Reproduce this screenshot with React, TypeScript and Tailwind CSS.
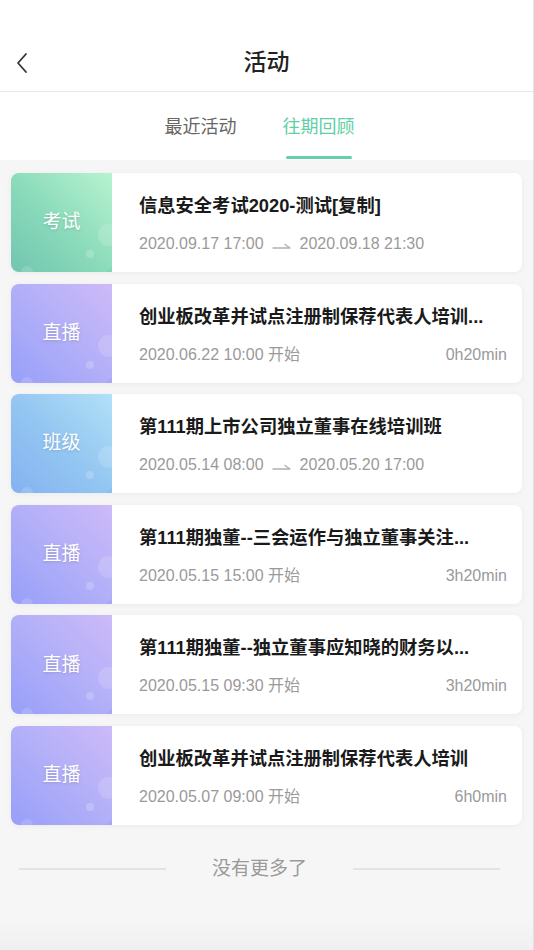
import React from "react";

type Item = {
  kind: "exam" | "live" | "class";
  label: string;
  title: string;
  start: string;
  end?: string;
  dur?: string;
};

const items: Item[] = [
  { kind: "exam", label: "考试", title: "信息安全考试2020-测试[复制]", start: "2020.09.17 17:00", end: "2020.09.18 21:30" },
  { kind: "live", label: "直播", title: "创业板改革并试点注册制保荐代表人培训...", start: "2020.06.22 10:00 开始", dur: "0h20min" },
  { kind: "class", label: "班级", title: "第111期上市公司独立董事在线培训班", start: "2020.05.14 08:00", end: "2020.05.20 17:00" },
  { kind: "live", label: "直播", title: "第111期独董--三会运作与独立董事关注...", start: "2020.05.15 15:00 开始", dur: "3h20min" },
  { kind: "live", label: "直播", title: "第111期独董--独立董事应知晓的财务以...", start: "2020.05.15 09:30 开始", dur: "3h20min" },
  { kind: "live", label: "直播", title: "创业板改革并试点注册制保荐代表人培训", start: "2020.05.07 09:00 开始", dur: "6h0min" },
];

function Harpoon() {
  return (
    <svg width="22" height="10" viewBox="0 0 22 10" className="mx-[7px] mt-[3px]">
      <path d="M2 7 H19 L14 3.5" fill="none" stroke="#b0b0b0" strokeWidth="1.4" strokeLinecap="round" strokeLinejoin="round" />
    </svg>
  );
}

function Panel({ kind, label }: { kind: Item["kind"]; label: string }) {
  const bg =
    kind === "exam"
      ? "bg-gradient-to-tr from-[#62bfa6] via-[#7fd8b4] to-[#b0f2cb]"
      : kind === "class"
      ? "bg-gradient-to-tr from-[#76a9ee] via-[#88c0f0] to-[#a9ddf6]"
      : "bg-gradient-to-tr from-[#8c94f8] via-[#a9a6f7] to-[#c8b2f7]";
  return (
    <div className={`relative w-[101px] shrink-0 overflow-hidden rounded-l-[8px] ${bg} flex items-center justify-center`}>
      <div className="absolute -left-[60px] -top-[70px] h-[190px] w-[190px] rounded-full bg-white/10" />
      <div className="absolute -right-[8px] top-[52%] h-[22px] w-[22px] rounded-full bg-white/15" />
      <div className="absolute right-[18px] bottom-[14px] h-[8px] w-[8px] rounded-full bg-white/20" />
      <div className="absolute left-[10px] -bottom-[6px] h-[12px] w-[12px] rounded-full bg-white/15" />
      <span className="relative text-[19px] text-white [text-shadow:0_1px_3px_rgba(0,0,0,0.15)]">{label}</span>
    </div>
  );
}

function Card({ it }: { it: Item }) {
  return (
    <div className="flex h-[99px] rounded-[8px] bg-white shadow-[0_1px_6px_rgba(0,0,0,0.05)]">
      <Panel kind={it.kind} label={it.label} />
      <div className="flex min-w-0 flex-1 flex-col pl-[27px] pr-[15px] pt-[19px]">
        <div className="truncate text-[18.3px] font-semibold leading-[28px] text-[#1a1a1a]">{it.title}</div>
        <div className="mt-[13px] flex items-center text-[16px] leading-[22px] text-[#9a9a9a]">
          {it.end ? (
            <>
              <span>{it.start}</span>
              <Harpoon />
              <span>{it.end}</span>
            </>
          ) : (
            <>
              <span className="flex-1">{it.start}</span>
              <span>{it.dur}</span>
            </>
          )}
        </div>
      </div>
    </div>
  );
}

export default function App() {
  return (
    <div
      className="flex min-h-[950px] w-[534px] flex-col border-r border-[#e2e2e2] bg-[#f6f6f6]"
      style={{ fontFamily: '"Liberation Sans", "Noto Sans CJK SC", sans-serif' }}
    >
      <div className="relative flex h-[92px] items-end justify-center border-b border-[#e8e8e8] bg-white pb-[14px]">
        <svg className="absolute left-[15px] top-[52px]" width="14" height="22" viewBox="0 0 14 22">
          <path d="M11 2 L3 11 L11 20" fill="none" stroke="#333" strokeWidth="1.8" strokeLinecap="round" strokeLinejoin="round" />
        </svg>
        <div className="text-[23px] font-medium leading-[30px] text-[#222]">活动</div>
      </div>
      <div className="flex h-[68px] items-stretch justify-center gap-[46px] bg-white pr-[14px]">
        <div className="flex items-center pt-[2px] text-[18px] text-[#666]">最近活动</div>
        <div className="relative flex items-center pt-[2px] text-[18px] text-[#5fcfa6]">
          往期回顾
          <div className="absolute left-[3px] right-[3px] bottom-[1px] h-[3px] rounded-full bg-[#66d0aa]" />
        </div>
      </div>
      <div className="flex flex-col gap-[11.6px] px-[11px] pt-[13px]">
        {items.map((it, i) => (
          <Card key={i} it={it} />
        ))}
      </div>
      <div className="mt-[30px] flex items-center pl-[19px]">
        <div className="h-[2px] w-[147px] bg-[#e3e3e3]" />
        <div className="w-[187px] text-center text-[19px] text-[#9a9a9a]">没有更多了</div>
        <div className="h-[2px] w-[147px] bg-[#e3e3e3]" />
      </div>
      <div className="mt-[30px] flex-1 bg-gradient-to-b from-[#f7f7f7] to-[#f0f0f0]" />
    </div>
  );
}
